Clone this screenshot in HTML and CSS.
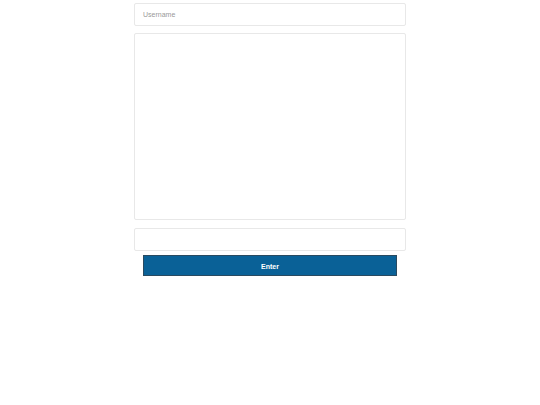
FILE: index.html
```html
<!DOCTYPE html>
<html>
<head>
<meta charset="utf-8">
<link rel="stylesheet" href="styles.css">
</head>
<body>
<div class="wrap">
  <input class="field" type="text" placeholder="Username">
  <textarea class="area"></textarea>
  <input class="field msg" type="text">
  <button class="enter">Enter</button>
</div>
</body>
</html>
```
FILE: styles.css
```css
html, body { margin: 0; padding: 0; background: #fff; }
body { font-family: "Liberation Sans", Arial, sans-serif; }
.wrap {
  width: 272px;
  margin: 0 auto;
  padding-top: 3px;
  display: flex;
  flex-direction: column;
  align-items: center;
}
.field {
  box-sizing: border-box;
  width: 272px;
  height: 23px;
  border: 1px solid #e8e8e8;
  border-radius: 2px;
  padding: 0 8px;
  font-family: "Liberation Sans", Arial, sans-serif;
  font-size: 7px;
  color: #333;
  outline: none;
  margin: 0;
}
.field::placeholder { color: #999; opacity: 1; }
.area {
  box-sizing: border-box;
  width: 272px;
  height: 187px;
  margin-top: 7px;
  border: 1px solid #e8e8e8;
  border-radius: 2px;
  resize: none;
  outline: none;
  padding: 0;
}
.msg { margin-top: 8px; }
.enter {
  box-sizing: border-box;
  width: 254px;
  height: 21px;
  margin-top: 4px;
  background: #0a6197;
  border: 1px solid #2a4a60;
  color: #fff;
  font-family: "Liberation Sans", Arial, sans-serif;
  font-size: 7px;
  font-weight: bold;
  padding: 2px 0 0;
}
```
